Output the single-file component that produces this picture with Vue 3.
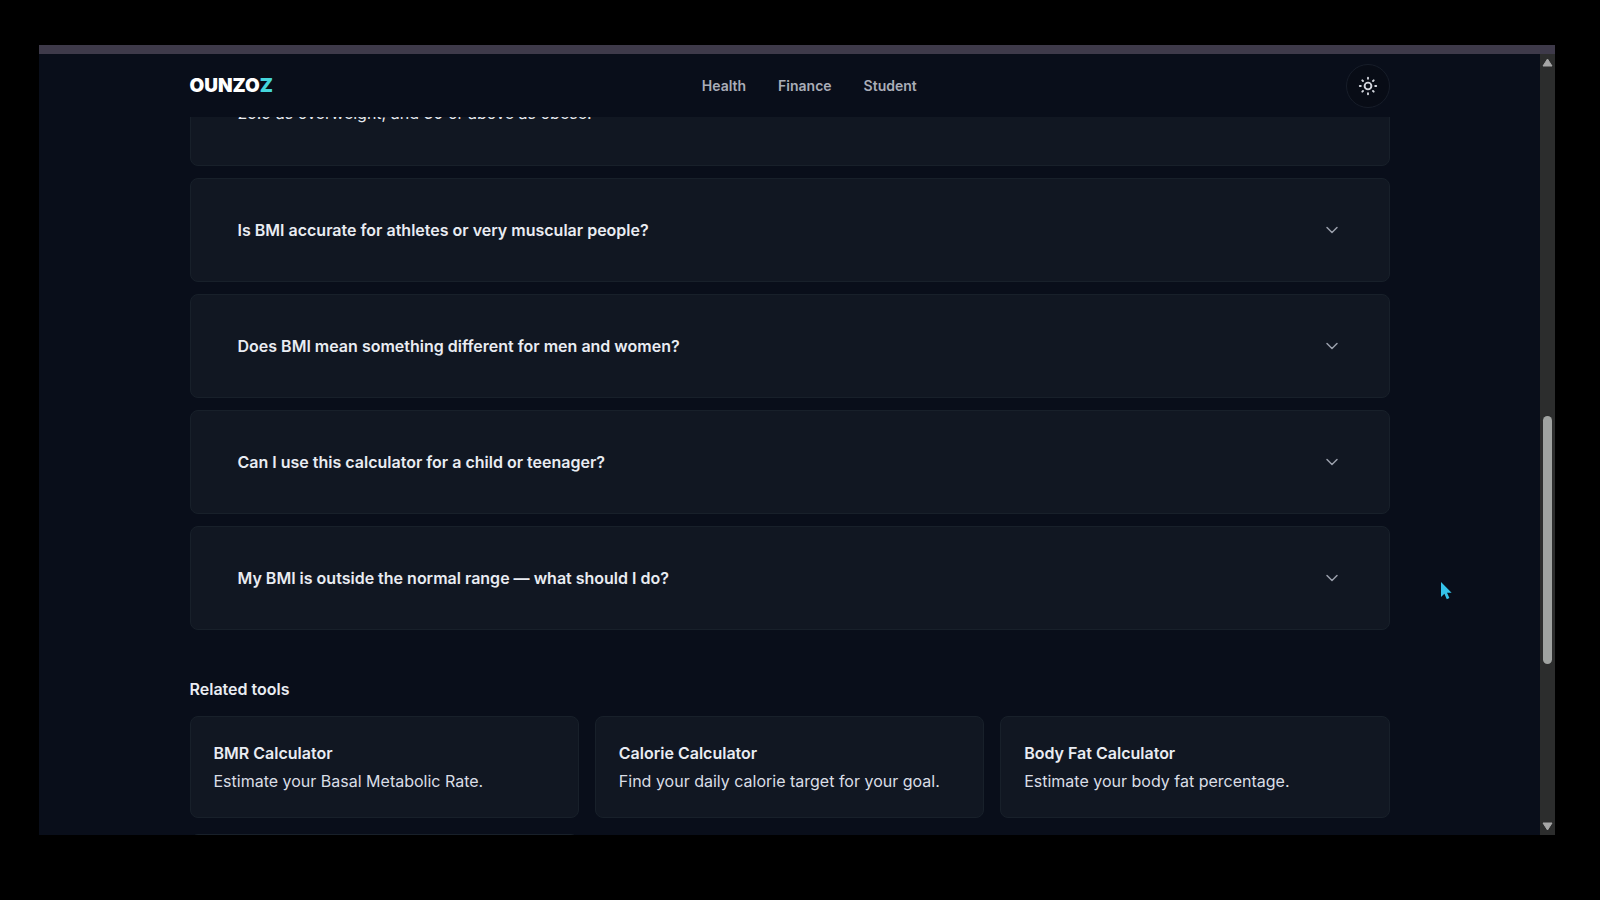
<script setup>
import { ref } from 'vue'

const links = ['Health', 'Finance', 'Student']
const questions = [
  'Is BMI accurate for athletes or very muscular people?',
  'Does BMI mean something different for men and women?',
  'Can I use this calculator for a child or teenager?',
  'My BMI is outside the normal range — what should I do?',
]
const tools = [
  { title: 'BMR Calculator', text: 'Estimate your Basal Metabolic Rate.' },
  { title: 'Calorie Calculator', text: 'Find your daily calorie target for your goal.' },
  { title: 'Body Fat Calculator', text: 'Estimate your body fat percentage.' },
]
const open = ref(-1)
const toggle = (i) => { open.value = open.value === i ? -1 : i }
</script>

<template>
  <div class="screen">
    <div class="window">
      <div class="strip"></div>
      <div class="view">
        <div class="page">
          <header class="header">
            <div class="container bar">
              <a href="#" class="logo">OUNZO<span>Z</span></a>
              <nav class="nav">
                <a v-for="l in links" :key="l" href="#">{{ l }}</a>
              </nav>
              <button class="theme" type="button" aria-label="Toggle theme">
                <svg width="20" height="20" viewBox="0 0 20 20" fill="none" stroke="currentColor" stroke-width="1.9" stroke-linecap="round">
                  <circle cx="10" cy="10" r="3.4" />
                  <path d="M10 1.8v1M10 17.2v1M1.8 10h1M17.2 10h1M4.3 4.3l.7.7M15 15l.7.7M4.3 15.7l.7-.7M15 5l.7-.7" />
                </svg>
              </button>
            </div>
          </header>
          <main class="container main">
            <section class="faq">
              <article class="card answer">
                <p>29.9 as overweight, and 30 or above as obese.</p>
              </article>
              <button
                v-for="(q, i) in questions"
                :key="q"
                type="button"
                class="card question"
                :aria-expanded="open === i"
                @click="toggle(i)"
              >
                <span>{{ q }}</span>
                <svg width="16" height="16" viewBox="0 0 16 16" fill="none" stroke="currentColor" stroke-width="1.5" stroke-linecap="round" stroke-linejoin="round">
                  <path d="M3 5.5l5 5 5-5" />
                </svg>
              </button>
            </section>
            <h2>Related tools</h2>
            <section class="tools">
              <a v-for="t in tools" :key="t.title" href="#" class="card tool">
                <strong>{{ t.title }}</strong>
                <span>{{ t.text }}</span>
              </a>
              <div class="card tool"></div>
            </section>
          </main>
        </div>
        <div class="scroll" aria-hidden="true">
          <svg width="11" height="9" viewBox="0 0 11 9"><path d="M5.5 1L10 8H1z" fill="#a6a6a6" stroke="#a6a6a6" stroke-linejoin="round" /></svg>
          <div class="track"><div class="thumb"></div></div>
          <svg width="11" height="9" viewBox="0 0 11 9"><path d="M5.5 8L10 1H1z" fill="#a6a6a6" stroke="#a6a6a6" stroke-linejoin="round" /></svg>
        </div>
      </div>
    </div>
    <svg class="cursor" width="13" height="20" viewBox="0 0 13 20" aria-hidden="true">
      <path d="M1 1v15l3.4-3.2 2.4 5.4 2.6-1.2-2.4-5.2h4.6z" fill="#35c3ea" />
    </svg>
  </div>
</template>

<style>
body {
  background: #000;
}
</style>

<style scoped>
* {
  box-sizing: border-box;
}
.screen {
  position: relative;
  height: 100vh;
  padding: 45px 45px 65px 39px;
  background: #000;
  font-family: Inter, "Liberation Sans", sans-serif;
  font-size: 16px;
  line-height: 28px;
  color: #e9ecf2;
}
.window {
  height: 100%;
  display: flex;
  flex-direction: column;
  overflow: hidden;
}
.strip {
  flex: none;
  height: 9px;
  background: #3e3a4a;
}
.view {
  flex: 1;
  min-height: 0;
  display: flex;
}
.page {
  flex: 1;
  min-width: 0;
  overflow: hidden;
  background: #090e1a;
}
.container {
  max-width: 1200px;
  margin: 0 auto;
}
.header {
  position: relative;
  z-index: 1;
  background: #090e1a;
}
.bar {
  height: 63px;
  display: flex;
  align-items: center;
  justify-content: space-between;
}
a {
  color: inherit;
  text-decoration: none;
}
.logo {
  font-size: 19px;
  font-weight: 900;
  color: #fff;
}
.logo span {
  color: #45d6dc;
}
.nav {
  display: flex;
  gap: 32px;
  font-size: 14px;
  font-weight: 600;
  color: #a9adb8;
}
.theme {
  width: 44px;
  height: 44px;
  padding: 0;
  display: grid;
  place-items: center;
  border: 1px solid #171d29;
  border-radius: 50%;
  background: #080c16;
  color: #d3d6de;
}
.card {
  border: 1px solid #18202a;
  border-radius: 8px;
  background: #111722;
}
.faq {
  display: flex;
  flex-direction: column;
  gap: 12px;
}
.answer {
  margin-top: -40px;
  padding: 21px 47px 38px;
}
.answer p {
  margin: 0;
}
.question {
  width: 100%;
  height: 104px;
  padding: 0 49px 0 47px;
  display: flex;
  align-items: center;
  justify-content: space-between;
  font: inherit;
  font-weight: 600;
  color: inherit;
  text-align: left;
}
.question svg {
  color: #9a9fab;
}
h2 {
  margin: 45px 0 13px;
  font-size: 16px;
  font-weight: 600;
  line-height: 28px;
}
.tools {
  display: grid;
  grid-template-columns: repeat(3, 1fr);
  gap: 16px;
}
.tool {
  min-height: 101px;
  padding: 22px 23px;
  display: flex;
  flex-direction: column;
}
.tool strong {
  font-weight: 600;
}
.tool span {
  color: #dadee6;
}
.scroll {
  flex: none;
  width: 15px;
  padding: 4px 0;
  display: flex;
  flex-direction: column;
  align-items: center;
  background: #2c2d2d;
}
.track {
  flex: 1;
  width: 9px;
  padding: 349px 0 0;
}
.thumb {
  height: 248px;
  border-radius: 5px;
  background: #a0a3a1;
}
.cursor {
  position: absolute;
  left: 1440px;
  top: 581px;
}
</style>
